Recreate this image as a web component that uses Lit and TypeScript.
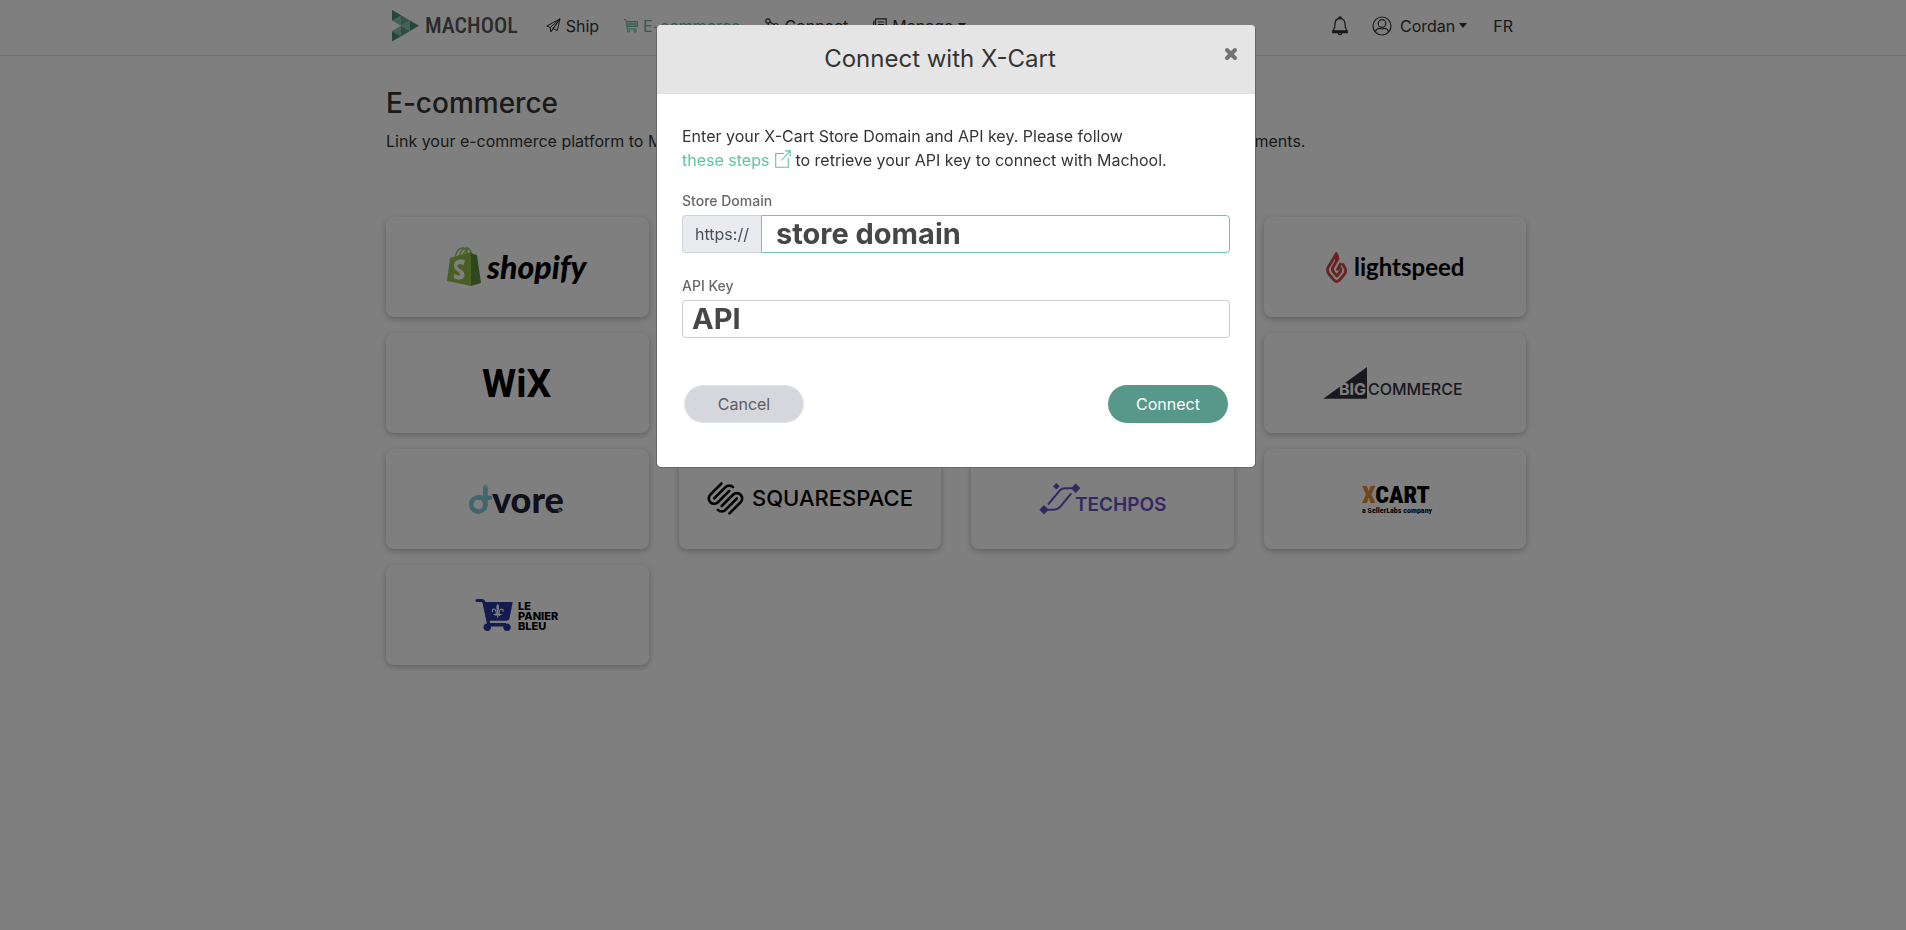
import { LitElement, html, css, svg, TemplateResult } from "lit";
import { customElement, state } from "lit/decorators.js";

interface Platform {
  name: string;
  art: TemplateResult;
}

const platforms: Platform[] = [
  {
    name: "Shopify",
    art: svg`
      <path d="M69 41c1-6 4-10 8-10 3 0 4 2 4 7M73 40c1-5 4-9 8-9 2 0 3 2 4 4M77 39c0-3 3-6 5-6" fill="none" stroke="#95bf47" stroke-width="1.4"/>
      <path d="M64 41l21-6v34l-24-5z" fill="#95bf47"/>
      <path d="M85 35l2 2 4 1 4 28-10 3z" fill="#5e8e3e"/>
      <path d="M79 43.500l-1.500 4.500c-4-2-6-.5-6 1 0 3 7 3.500 7 9 0 5-7 6-11 2.500l1-4c3 2.500 5.500 2.500 5.500 1 0-3-6-3.500-6-9 0-5.500 6-7.500 11-5z" fill="#fff"/>
      <text class="shopify" x="101" y="62">shopify</text>`,
  },
  { name: "WooCommerce", art: svg`<text class="plain" x="131" y="58" text-anchor="middle">WooCommerce</text>` },
  { name: "Magento", art: svg`<text class="plain" x="131" y="58" text-anchor="middle">Magento</text>` },
  {
    name: "Lightspeed",
    art: svg`
      <g fill="none" stroke="#d04448" stroke-width="2.800" stroke-linejoin="round">
        <path d="M72.700 36L64 50.500Q62.600 54 65.200 57.500L70.200 63.300Q72.700 65.600 75.200 63.300L80.200 57.500Q83 54 80.700 50.500L78.500 46.500"/>
        <path d="M74.500 40.500L68.800 50.500Q67.800 53 69.500 55L72.700 59L76.500 54.500Q77.500 52.500 76 50.500"/>
        <path d="M77 46L73 53.500"/>
      </g>
      <path d="M72.700 34.500l2.500 5-3.500 5-2-3.500z" fill="#d04448"/>
      <text class="lightspeed" x="90" y="59">lightspeed</text>`,
  },
  { name: "Wix", art: svg`<text class="wix" x="96" y="64">WiX</text>` },
  { name: "PrestaShop", art: svg`<text class="plain" x="131" y="58" text-anchor="middle">PrestaShop</text>` },
  { name: "Etsy", art: svg`<text class="plain" x="131" y="58" text-anchor="middle">Etsy</text>` },
  {
    name: "BigCommerce",
    art: svg`
      <path d="M59.300 65.700L103 34v31.700z" fill="#34313f"/>
      <text class="big" x="75" y="62">BIG</text>
      <text class="commerce" x="104" y="62">COMMERCE</text>`,
  },
  {
    name: "Dvore",
    art: svg`
      <g fill="none" stroke="#84c9d8" stroke-width="4.600" stroke-linecap="round">
        <circle cx="92.300" cy="55.400" r="7.200"/>
        <path d="M99.400 38v17.400M93 48.800h11"/>
      </g>
      <circle cx="99.300" cy="37" r="1.800" fill="#b9e0e8"/>
      <text class="dvore" x="106" y="64">vore</text>
      <circle cx="173.500" cy="61.500" r="1.800" fill="#7d8494"/>`,
  },
  {
    name: "Squarespace",
    art: svg`
      <g transform="translate(28 31) scale(1.540)" fill="none" stroke="#000" stroke-width="1.700" stroke-linecap="round">
        <path d="M4.650 11.980L12 4.630C13.350 3.280 15.560 3.280 16.900 4.630"/>
        <path d="M14.440 7.100L7.090 14.450C5.740 15.800 3.530 15.800 2.180 14.450C.8 13.100.8 10.900 2.180 9.540L9.400 2.300"/>
        <path d="M19.350 12.020L12 19.370C10.650 20.720 8.440 20.720 7.100 19.370"/>
        <path d="M9.560 16.900L16.910 9.550C18.260 8.200 20.470 8.200 21.820 9.550C23.200 10.900 23.200 13.100 21.820 14.460L14.600 21.700"/>
      </g>
      <text class="squarespace" x="73" y="57">SQUARESPACE</text>`,
  },
  {
    name: "Techpos",
    art: svg`
      <path d="M77 55.700L89 41.200Q91 39.300 94 39.300H104M100.300 44.300L89 58Q86.500 60.700 83 60.700H73" fill="none" stroke="#6553c8" stroke-width="2"/>
      <path d="M85.300 34l3.300 3.300-3.300 3.300-3.300-3.300zM104.700 34.600l4.700 4.700-4.700 4.700-4.700-4.700zM73 56l4.700 4.700-4.700 4.700-4.700-4.700z" fill="#6553c8"/>
      <text class="techpos" x="104" y="62">TECHPOS</text>`,
  },
  {
    name: "X-Cart",
    art: svg`
      <text class="xcart" x="98" y="54"><tspan fill="#e08a30">X</tspan>CART</text>
      <text class="xcart-sub" x="98" y="64">a SellerLabs company</text>`,
  },
  {
    name: "Le Panier Bleu",
    art: svg`
      <g fill="#26399b">
        <path d="M96.500 37H126.700L123.500 53.500Q122.800 55.700 120.500 55.700H103.500V58H120V60.500H104Q100.500 60.500 100.700 57z"/>
        <circle cx="101.300" cy="62.300" r="3.700"/><circle cx="121" cy="62.300" r="3.700"/>
        <path d="M101 59.500h20v2h-20z"/>
      </g>
      <path d="M91 35.500h4.500q2 0 2.500 2l4.500 20" fill="none" stroke="#26399b" stroke-width="3" stroke-linecap="round"/>
      <g fill="none" stroke="#fff" stroke-width="1.200" stroke-linecap="round">
        <path d="M111.700 40v12M108 49.500h7.400M110 50.500q1-6-2-6.500-2.300.2-1.500 2.500M113.400 50.500q-1-6 2-6.500 2.300.2 1.500 2.500"/>
      </g>
      <path d="M111.700 38.500q2.600 4 0 8.500-2.600-4.500 0-8.500z" fill="#fff"/>
      <text class="panier" x="132" y="45">LE</text>
      <text class="panier" x="132" y="55">PANIER</text>
      <text class="panier" x="132" y="65">BLEU</text>`,
  },
];

const planeIcon = html`<svg width="15" height="15" viewBox="0 0 15 15" fill="none" stroke="currentColor" stroke-linejoin="round" aria-hidden="true">
  <path d="M14 .8L.8 8l3.400 1.500L14 .8l-7 9.800 4.300 2L14 .8M4.200 9.500l.6 4.300L7 10.600M5 13.500l9-12.500"/></svg>`;
const cartIcon = html`<svg width="14" height="15" viewBox="0 0 14 15" fill="none" stroke="currentColor" aria-hidden="true">
  <path d="M0 1.500h1.800l1.400 9.500h9.300M2.200 3.500h11.300v5H3M2.600 6h10.800"/><path d="M3 4h10v4H3z" fill="currentColor" stroke="none" opacity=".4"/>
  <circle cx="4.500" cy="13" r="1.200"/><circle cx="11" cy="13" r="1.200"/></svg>`;
const connectIcon = html`<svg width="14" height="16" viewBox="0 0 14 16" fill="none" stroke="currentColor" stroke-width="1.200" aria-hidden="true">
  <circle cx="3" cy="3" r="2.200"/><circle cx="11" cy="7.500" r="2"/><circle cx="3.500" cy="12.500" r="2.200"/><path d="M5 4.200l4.200 2.300M3.200 5.200l.2 5M9.200 8.500L5.300 11.200"/></svg>`;
const manageIcon = html`<svg width="14" height="16" viewBox="0 0 14 16" fill="none" stroke="currentColor" stroke-width="1.200" aria-hidden="true">
  <path d="M2.500.8h10.700v14H.7v-12M2.500.8v14M5 4h6M5 6.500h6M5 9h4"/></svg>`;
const bellIcon = html`<svg width="16" height="20" viewBox="0 0 16 20" fill="none" stroke="currentColor" stroke-width="1.300" aria-hidden="true">
  <path d="M8 2.500c-3.500 0-5 2.500-5 5.500 0 4-.8 5.500-2.200 7v1.500h14.400V15C13.800 13.500 13 12 13 8c0-3-1.500-5.500-5-5.500z"/>
  <path d="M1.500 14.800h13v1.500h-13z" fill="currentColor"/><path d="M6.700 2.300a1.300 1.300 0 0 1 2.600 0M6.300 17a1.700 1.700 0 0 0 3.400 0"/></svg>`;
const userIcon = html`<svg width="20" height="20" viewBox="0 0 20 20" fill="none" stroke="currentColor" stroke-width="1.200" aria-hidden="true">
  <circle cx="10" cy="10" r="9"/><circle cx="10" cy="7.500" r="3.800"/><path d="M3.500 16c.5-3 2.500-3.700 4.500-3.700.8 0 1.300.7 2 .7s1.200-.7 2-.7c2 0 4 .7 4.500 3.700"/></svg>`;
const externalIcon = html`<svg class="external" width="16" height="18" viewBox="0 0 16 18" fill="none" stroke="currentColor" stroke-width="1.100" aria-hidden="true">
  <path d="M9 3.500H.7v13.800h12.600V8M10 .9h5.200v5.600M15 1L6.500 10.500"/></svg>`;
const brandMark = html`<svg width="27" height="32" viewBox="0 0 27 32" aria-hidden="true">
  <path d="M0 0l9 5.300v10.500L0 10.600z" fill="#8fbfad"/><path d="M0 0v10.600l9-5.300z" fill="#4f8d76"/>
  <path d="M9 5.300l9 5.200-9 5.300z" fill="#6ba892"/><path d="M18 10.500v10.600l-9-5.300z" fill="#8fc0ad"/>
  <path d="M18 10.500l9 5.300-9 5.300z" fill="#4f8d76"/><path d="M9 15.800l9 5.300-9 5.300z" fill="#5f9e87"/>
  <path d="M0 21l9-5.200v10.500z" fill="#8fbfad"/><path d="M0 21v10.600l9-5.300z" fill="#4f8d76"/></svg>`;
const closeIcon = html`<svg width="14" height="14" viewBox="0 0 14 14" fill="none" stroke="currentColor" stroke-width="4" stroke-linecap="round" aria-hidden="true">
  <path d="M3 3l8 8M11 3l-8 8"/></svg>`;

@customElement("app-root")
export class AppRoot extends LitElement {
  @state() private open = true;

  static styles = css`
    :host {
      display: block;
      box-sizing: border-box;
      min-height: 100vh;
      padding-left: 6px;
      background: #fff;
      color: #343434;
      font: 16px/24px Inter, "Liberation Sans", sans-serif;
    }
    * { box-sizing: border-box; }
    a { color: inherit; text-decoration: none; }
    button { font: inherit; color: inherit; border: 0; background: none; padding: 0; cursor: pointer; }
    svg { flex: none; }
    .topbar { margin-left: -6px; padding-left: 6px; border-bottom: 1px solid #dcdcdc; }
    .wrap { max-width: 1140px; margin: 0 auto; }
    nav { display: flex; align-items: center; height: 55px; padding: 0 13px 4px 6px; color: #303434; }
    .brand { display: flex; align-items: center; gap: 6px; margin-right: 28px; color: #55565a;
      font: 500 22px/24px "Roboto Condensed", Roboto, sans-serif; }
    .links { display: flex; align-items: center; gap: 25px; }
    .account { display: flex; align-items: center; gap: 26px; margin-left: auto; }
    .item { display: flex; align-items: center; gap: 5px; }
    .item.active { color: #62bd9f; }
    .item.user { gap: 8px; margin-left: -2px; }
    .name { display: flex; align-items: center; gap: 4px; }
    .caret { border: 4px solid transparent; border-top-width: 5px; border-top-color: currentColor; border-bottom: 0; }
    main { padding: 29px 0 64px; }
    h1 { margin: 0 0 8px; font-size: 28px; line-height: 36px; font-weight: 500; }
    .lead { margin: 0 0 64px; }
    .grid { display: grid; grid-template-columns: repeat(4, 1fr); gap: 16px 30px; }
    .card { display: flex; justify-content: center; border-radius: 8px; background: #fff;
      box-shadow: 0 2px 6px rgba(0, 0, 0, 0.25); }
    .shopify { font: italic 900 32px Lato, sans-serif; }
    .lightspeed { font: bold 24px Lato, sans-serif; }
    .wix { font: bold 39px Roboto, sans-serif; }
    .dvore { font: 900 36px Lato, sans-serif; fill: #1d2333; }
    .big { font: bold 16px Inter, sans-serif; fill: #fff; }
    .commerce { font: 500 16px Inter, sans-serif; fill: #34313f; }
    .squarespace { font: 500 22px Inter, sans-serif; }
    .techpos { font: 600 19px Inter, sans-serif; fill: #6553c8; }
    .xcart { font: 900 24px "Roboto Condensed", Roboto, sans-serif; }
    .xcart-sub { font: bold 8px "Roboto Condensed", Roboto, sans-serif; }
    .panier { font: 800 11px Inter, sans-serif; }
    .plain { font: 600 24px Inter, sans-serif; }

    .overlay { position: fixed; inset: 0; padding: 25px 0 25px 6px; overflow: auto; background: rgba(0, 0, 0, 0.5); }
    .modal { max-width: 600px; margin: 0 auto; border: 1px solid #666; border-width: 0 1px 1px; border-radius: 5px;
      background: #fff; background-clip: padding-box; }
    .modal-head { display: flex; padding: 16px 0 16px 16px; background: #e5e5e5; border-bottom: 1px solid #dee2e6;
      border-radius: 4px 4px 0 0; }
    h2 { flex: 1; margin: 0; text-align: center; font-size: 24px; line-height: 36px; font-weight: 400; }
    .close { display: grid; place-items: center; width: 48px; height: 26px; color: #727272; }
    form { padding: 30px 25px 44px; }
    form p { margin: 0 0 18px; }
    form a { color: #5fc4a1; }
    .external { vertical-align: -2px; margin-left: 1px; }
    label { display: block; margin-bottom: 4px; font-size: 14px; line-height: 21px; font-weight: 500; color: #686868; }
    .group { display: flex; height: 38px; margin-bottom: 22px; }
    .prefix { display: flex; align-items: center; padding: 0 12px; border: 1px solid #ced4da; border-right: 0;
      border-radius: 4px 0 0 4px; background: #e9ebef; color: #495057; }
    input { flex: 1; min-width: 0; padding: 0 9px 2px; border: 1px solid #c8ccd4; border-radius: 4px; outline: 0; background: #fff;
      color: #464646; font: bold 29px Inter, "Liberation Sans", sans-serif; }
    .domain { padding: 0 14px 2px; border-color: #6fc4a9; border-radius: 0 4px 4px 0; }
    .actions { display: flex; justify-content: space-between; padding: 25px 2px 0; }
    .btn { width: 120px; height: 38px; border-radius: 19px; }
    .cancel { background: #d5d7dc; border: 1px solid #e2e4ea; color: #5c5c5c; }
    .submit { background: #57988a; color: #fff; }
  `;

  private hide = () => {
    this.open = false;
  };

  private submit = (event: Event) => {
    event.preventDefault();
  };

  render() {
    return html`
      <header class="topbar">
        <nav class="wrap">
          <a class="brand" href="#home">${brandMark}<span>MACHOOL</span></a>
          <div class="links">
            <a class="item" href="#ship">${planeIcon}<span>Ship</span></a>
            <a class="item active" href="#ecommerce">${cartIcon}<span>E-commerce</span></a>
            <a class="item" href="#connect">${connectIcon}<span>Connect</span></a>
            <button class="item">${manageIcon}<span>Manage</span><span class="caret"></span></button>
          </div>
          <div class="account">
            <button class="item" aria-label="Notifications">${bellIcon}</button>
            <button class="item user">${userIcon}<span class="name">Cordan<span class="caret"></span></span></button>
            <a href="#fr">FR</a>
          </div>
        </nav>
      </header>
      <main class="wrap">
        <h1>E-commerce</h1>
        <p class="lead">Link your e-commerce platform to Machool to automatically import your orders and simply create and manage shipments.</p>
        <div class="grid">
          ${platforms.map(
            (p) => html`<button class="card" aria-label=${p.name}>
              <svg width="262" height="100" viewBox="0 0 262 100" aria-hidden="true">${p.art}</svg>
            </button>`
          )}
        </div>
      </main>
      ${this.open
        ? html`<div class="overlay">
            <section class="modal" role="dialog" aria-modal="true" aria-labelledby="dialog-title">
              <div class="modal-head">
                <h2 id="dialog-title">Connect with X-Cart</h2>
                <button class="close" aria-label="Close" @click=${this.hide}>${closeIcon}</button>
              </div>
              <form @submit=${this.submit}>
                <p>
                  Enter your X-Cart Store Domain and API key. Please follow<br />
                  <a href="#steps">these steps ${externalIcon}</a> to retrieve your API key to connect with Machool.
                </p>
                <label for="domain">Store Domain</label>
                <div class="group">
                  <span class="prefix">https://</span>
                  <input class="domain" id="domain" type="text" value="store domain" />
                </div>
                <label for="key">API Key</label>
                <div class="group"><input id="key" type="text" value="API" /></div>
                <div class="actions">
                  <button class="btn cancel" type="button" @click=${this.hide}>Cancel</button>
                  <button class="btn submit" type="submit">Connect</button>
                </div>
              </form>
            </section>
          </div>`
        : null}
    `;
  }
}
